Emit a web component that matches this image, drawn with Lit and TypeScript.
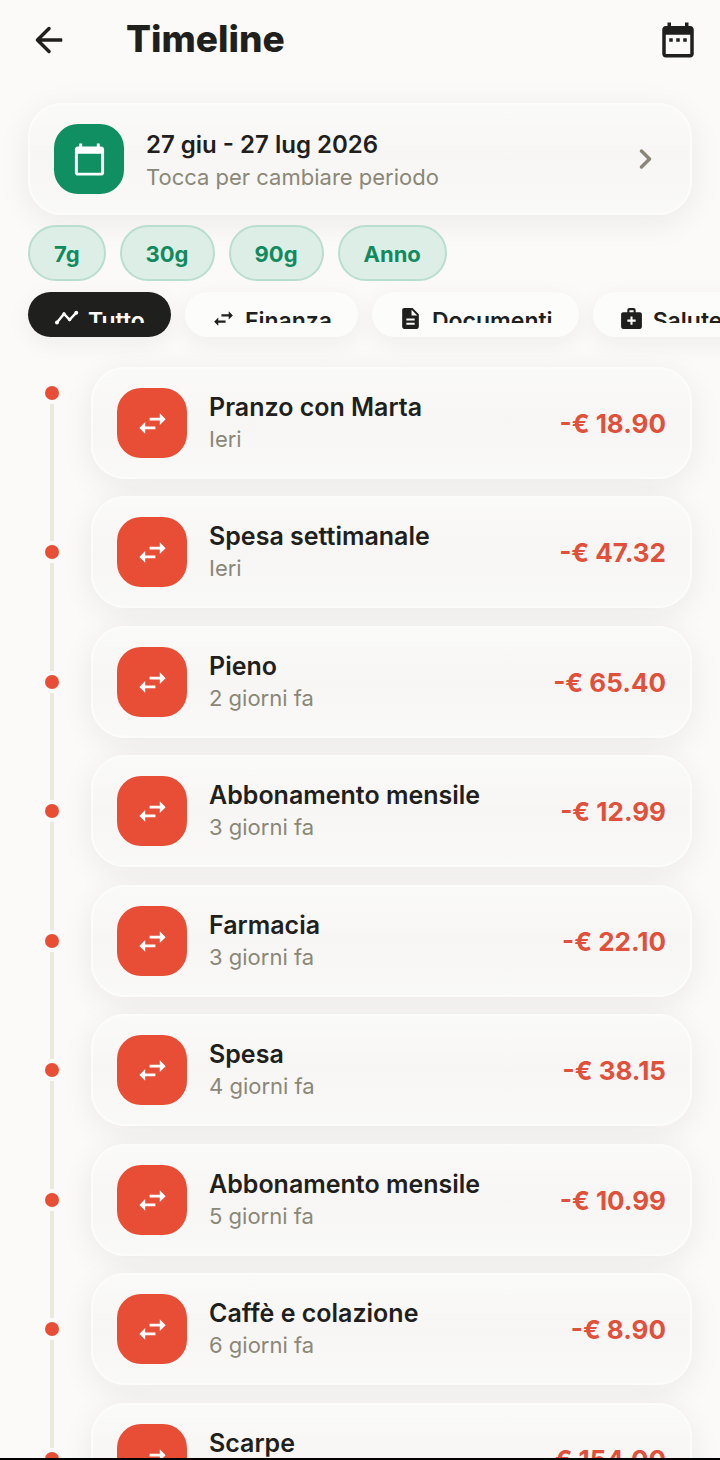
import { LitElement, html, css, svg } from "lit";
import { customElement, property } from "lit/decorators.js";
import { classMap } from "lit/directives/class-map.js";

const ICONS: Record<string, string> = {
  back: "M19 11H7.83l4.88-4.88c.39-.39.39-1.03 0-1.42-.39-.39-1.02-.39-1.41 0l-6.59 6.59c-.39.39-.39 1.02 0 1.41l6.59 6.59c.39.39 1.02.39 1.41 0 .39-.39.39-1.02 0-1.41L7.83 13H19c.3 0 .6-.2.6-.5v-1c0-.3-.3-.5-.6-.5z",
  range: "M9 11H7v2h2v-2zm4 0h-2v2h2v-2zm4 0h-2v2h2v-2zm2-7h-1V2h-2v2H8V2H6v2H5c-1.11 0-1.99.9-1.99 2L3 20c0 1.1.89 2 2 2h14c1.1 0 2-.9 2-2V6c0-1.1-.9-2-2-2zm0 16H5V9h14v11z",
  calendar: "M20 3h-1V1h-2v2H7V1H5v2H4c-1.1 0-2 .9-2 2v16c0 1.1.9 2 2 2h16c1.1 0 2-.9 2-2V5c0-1.1-.9-2-2-2zm0 18H4V8h16v13z",
  chevron: "M9.29 15.88L13.17 12 9.29 8.12c-.39-.39-.39-1.02 0-1.41.39-.39 1.02-.39 1.41 0l4.59 4.59c.39.39.39 1.02 0 1.41L10.7 17.3c-.39.39-1.02.39-1.41 0-.38-.39-.39-1.03 0-1.42z",
  swap: "M6.99 11L3 15l3.99 4v-3H14v-2H6.99v-3zM21 9l-3.99-4v3H10v2h7.01v3L21 9z",
  document: "M14 2H6c-1.1 0-1.99.9-1.99 2L4 20c0 1.1.89 2 1.99 2H18c1.1 0 2-.9 2-2V8l-6-6zm2 16H8v-2h8v2zm0-4H8v-2h8v2zm-3-5V3.5L18.5 9H13z",
  health: "M20 6h-4V4c0-1.1-.9-2-2-2h-4c-1.1 0-2 .9-2 2v2H4c-1.1 0-2 .9-2 2v12c0 1.1.9 2 2 2h16c1.1 0 2-.9 2-2V8c0-1.1-.9-2-2-2zM10 4h4v2h-4V4zm6 11h-3v3h-2v-3H8v-2h3v-3h2v3h3v2z",
};

const TREND = svg`
  <path d="M2.8 15.8L9.6 7.6L15 13.2L21.4 6.4" fill="none" stroke="currentColor" stroke-width="2.3"></path>
  <circle cx="2.8" cy="15.8" r="1.9"></circle>
  <circle cx="9.6" cy="7.8" r="1.7"></circle>
  <circle cx="15" cy="13" r="1.7"></circle>
  <circle cx="21.4" cy="6.4" r="1.9"></circle>
`;

const icon = (name: string) => html`
  <svg class="icon" viewBox="0 0 24 24" aria-hidden="true">
    ${name === "trend" ? TREND : svg`<path d=${ICONS[name]}></path>`}
  </svg>
`;

interface Entry {
  title: string;
  when: string;
  amount: string;
}

const ENTRIES: Entry[] = [
  { title: "Pranzo con Marta", when: "Ieri", amount: "-€ 18.90" },
  { title: "Spesa settimanale", when: "Ieri", amount: "-€ 47.32" },
  { title: "Pieno", when: "2 giorni fa", amount: "-€ 65.40" },
  { title: "Abbonamento mensile", when: "3 giorni fa", amount: "-€ 12.99" },
  { title: "Farmacia", when: "3 giorni fa", amount: "-€ 22.10" },
  { title: "Spesa", when: "4 giorni fa", amount: "-€ 38.15" },
  { title: "Abbonamento mensile", when: "5 giorni fa", amount: "-€ 10.99" },
  { title: "Caffè e colazione", when: "6 giorni fa", amount: "-€ 8.90" },
  { title: "Scarpe", when: "6 giorni fa", amount: "-€ 154.00" },
];

const RANGES = ["7g", "30g", "90g", "Anno"];

const FILTERS = [
  { label: "Tutto", icon: "trend" },
  { label: "Finanza", icon: "swap" },
  { label: "Documenti", icon: "document" },
  { label: "Salute", icon: "health" },
];

const shared = css`
  * {
    box-sizing: border-box;
  }
  .icon {
    display: block;
    flex: none;
    width: 35px;
    height: 35px;
    fill: currentColor;
  }
  .card {
    display: flex;
    align-items: center;
    gap: 22px;
    width: 100%;
    height: 112px;
    padding: 0 24px;
    border: 2px solid #fcfcfb;
    border-radius: 34px;
    background: linear-gradient(#fafaf9, #f7f6f5 50%, #f9f9f8);
    box-shadow: 0 7px 32px rgba(30, 30, 28, 0.07);
    font: inherit;
    color: inherit;
    text-align: left;
  }
  .tile {
    display: grid;
    place-items: center;
    flex: none;
    width: 70px;
    height: 70px;
    border-radius: 24px;
    color: #fff;
  }
  .texts {
    display: flex;
    flex: 1;
    flex-direction: column;
    min-width: 0;
  }
  .title {
    font-size: 25px;
    line-height: 34px;
    font-weight: 600;
    white-space: nowrap;
  }
  .sub {
    font-size: 22px;
    line-height: 30px;
    color: #8a8778;
    white-space: nowrap;
  }
`;

@customElement("timeline-entry")
export class TimelineEntry extends LitElement {
  @property({ attribute: false }) entry!: Entry;
  @property({ type: Boolean }) first = false;

  static styles = [
    shared,
    css`
      :host {
        display: flex;
        gap: 15px;
      }
      .rail {
        display: flex;
        flex: none;
        flex-direction: column;
        align-items: center;
        gap: 4px;
        width: 48px;
      }
      .rail.first {
        padding-top: 28px;
      }
      .line {
        flex: 1;
        width: 4px;
        background: #ebe9da;
      }
      .dot {
        width: 14px;
        height: 14px;
        border-radius: 50%;
        background: #e84e35;
      }
      .slot {
        flex: 1;
        min-width: 0;
        padding: 9px 0 8px;
      }
      .tile {
        background: #e84e35;
      }
      .texts {
        padding-bottom: 2px;
      }
      .amount {
        padding-top: 2px;
        font-size: 26px;
        line-height: 34px;
        font-weight: 700;
        color: #e0503a;
        white-space: nowrap;
      }
    `,
  ];

  render() {
    const { title, when, amount } = this.entry;
    return html`
      <div class=${classMap({ rail: true, first: this.first })}>
        ${this.first ? null : html`<span class="line"></span>`}
        <span class="dot"></span>
        <span class="line"></span>
      </div>
      <div class="slot">
        <article class="card">
          <span class="tile">${icon("swap")}</span>
          <div class="texts">
            <span class="title">${title}</span>
            <span class="sub">${when}</span>
          </div>
          <span class="amount">${amount}</span>
        </article>
      </div>
    `;
  }
}

@customElement("app-root")
export class AppRoot extends LitElement {
  static styles = [
    shared,
    css`
      :host {
        display: flex;
        flex-direction: column;
        height: 100vh;
        overflow: hidden;
        border-bottom: 2px solid #000;
        box-sizing: border-box;
        background: #fbfaf8;
        color: #1f1f1d;
        font-family: Inter, "Liberation Sans", sans-serif;
      }
      button {
        margin: 0;
        cursor: pointer;
      }
      .bar {
        display: flex;
        flex: none;
        align-items: center;
        height: 80px;
        padding: 0 21px 0 28px;
      }
      .bar button {
        padding: 0;
        border: 0;
        background: none;
        color: inherit;
      }
      .bar .icon {
        width: 42px;
        height: 42px;
      }
      h1 {
        flex: 1;
        margin: 0;
        padding: 0 0 2px 56px;
        font-size: 37px;
        line-height: 48px;
        font-weight: 800;
      }
      .period {
        flex: none;
        padding: 23px 28px 0;
      }
      .period .tile {
        background: #0f8f62;
      }
      .period .title {
        font-size: 24px;
      }
      .period .texts {
        padding-top: 2px;
      }
      .period .icon {
        width: 42px;
        height: 42px;
        color: #8a8778;
      }
      .period .tile .icon {
        width: 35px;
        height: 35px;
        color: #fff;
      }
      .ranges {
        display: flex;
        flex: none;
        gap: 14px;
        padding: 10px 28px 0;
      }
      .range {
        height: 56px;
        padding: 2px 24px 0;
        border: 2px solid #b9decf;
        border-radius: 28px;
        background: #dceee5;
        color: #128a5f;
        font: inherit;
        font-size: 22px;
        line-height: 30px;
        font-weight: 700;
      }
      .filters {
        display: flex;
        flex: none;
        gap: 14px;
        padding: 11px 28px 0;
      }
      .filter {
        display: flex;
        flex: none;
        align-items: flex-start;
        gap: 9px;
        height: 45px;
        padding: 14px 26px;
        border: 0;
        border-radius: 23px;
        background: #fcfcfb;
        box-shadow: 0 6px 24px rgba(30, 30, 28, 0.06);
        color: inherit;
        font: inherit;
        font-size: 23px;
        line-height: 30px;
        font-weight: 600;
      }
      .filter.active {
        background: #1f1f1d;
        color: #fff;
      }
      .filter .icon {
        width: 25px;
        height: 25px;
      }
      .label {
        height: 17px;
        overflow: hidden;
      }
      .list {
        flex: 1;
        min-height: 0;
        margin: 0;
        padding: 21px 28px 0;
        overflow: hidden;
        list-style: none;
      }
      .row {
        display: grid;
        height: 129px;
      }
      .row:nth-child(even) {
        height: 130px;
      }
    `,
  ];

  render() {
    return html`
      <header class="bar">
        <button type="button" aria-label="Indietro">${icon("back")}</button>
        <h1>Timeline</h1>
        <button type="button" aria-label="Scegli date">${icon("range")}</button>
      </header>
      <div class="period">
        <button type="button" class="card">
          <span class="tile">${icon("calendar")}</span>
          <span class="texts">
            <span class="title">27 giu - 27 lug 2026</span>
            <span class="sub">Tocca per cambiare periodo</span>
          </span>
          ${icon("chevron")}
        </button>
      </div>
      <div class="ranges">
        ${RANGES.map((r) => html`<button type="button" class="range">${r}</button>`)}
      </div>
      <nav class="filters">
        ${FILTERS.map(
          (f, i) => html`
            <button type="button" class=${classMap({ filter: true, active: i === 0 })}>
              ${icon(f.icon)}<span class="label">${f.label}</span>
            </button>
          `
        )}
      </nav>
      <ul class="list">
        ${ENTRIES.map(
          (e, i) => html`
            <li class="row"><timeline-entry .entry=${e} ?first=${i === 0}></timeline-entry></li>
          `
        )}
      </ul>
    `;
  }
}
